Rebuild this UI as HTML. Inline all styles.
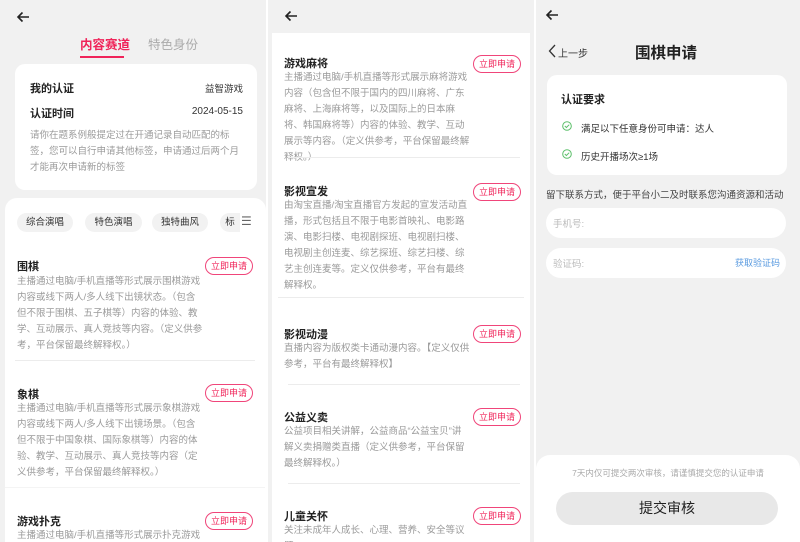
<!DOCTYPE html><html><head><meta charset="utf-8"><style>
*{margin:0;padding:0;box-sizing:border-box}
body{width:800px;height:542px;overflow:hidden;background:#fff;font-family:"Liberation Sans","Noto Sans CJK SC",sans-serif;position:relative}
.p{position:absolute;top:0;height:542px;background:#f1f1f1;overflow:hidden}
.a{position:absolute;white-space:nowrap}
.arrow{position:absolute;width:14px;height:12px}
.t{font-size:11px;font-weight:bold;color:#222}
.d{font-size:9.5px;color:#9a9a9a;line-height:16px;white-space:normal}
.btn{position:absolute;width:48px;height:18px;border:1.3px solid #f0457a;border-radius:10px;color:#f0245a;font-size:9px;text-align:center;line-height:16px}
.hr{position:absolute;height:1px;background:#ececec}
.chip{position:absolute;top:213px;height:19px;border-radius:10px;background:#f2f2f2;font-size:9.5px;color:#333;text-align:center;line-height:19px}
</style></head><body>
<div class="p" style="left:0;width:266px">
<svg class="arrow" style="left:16px;top:11px" viewBox="0 0 14 12"><path d="M13 6H2M6.5 1.5L2 6l4.5 4.5" stroke="#222" stroke-width="1.6" fill="none"/></svg>
<div class="a" style="left:80px;top:34px;font-size:12.5px;font-weight:bold;color:#f0245a">内容赛道</div>
<div style="position:absolute;left:80px;top:56px;width:44px;height:2px;background:#f0245a"></div>
<div class="a" style="left:148px;top:34px;font-size:12.5px;color:#aaa">特色身份</div>
<div style="position:absolute;left:15px;top:64px;width:242px;height:126px;background:#fff;border-radius:10px"></div>
<div class="a t" style="left:30px;top:80px">我的认证</div>
<div class="a" style="right:23px;top:81px;font-size:9.5px;color:#333">益智游戏</div>
<div class="a t" style="left:30px;top:105px">认证时间</div>
<div class="a" style="right:23px;top:106px;font-size:10px;color:#333">2024-05-15</div>
<div class="a d" style="left:30px;top:128px;width:218px">请你在题系例般提定过在开通记录自动匹配的标签，您可以自行申请其他标签，申请通过后两个月才能再次申请新的标签</div>
<div style="position:absolute;left:5px;top:198px;width:261px;height:360px;background:#fff;border-radius:12px 12px 0 0"></div>
<div class="chip" style="left:17px;width:56px">综合演唱</div>
<div class="chip" style="left:85px;width:57px">特色演唱</div>
<div class="chip" style="left:152px;width:56px">独特曲风</div>
<div class="chip" style="left:220px;width:20px;border-radius:10px 0 0 10px">标</div>
<div class="a" style="left:241px;top:214px;font-size:12px;color:#666">☰</div>
<div class="a t" style="left:17px;top:258px">围棋</div>
<div class="btn" style="left:205px;top:257px">立即申请</div>
<div class="a d" style="left:17px;top:274px;width:186px">主播通过电脑/手机直播等形式展示围棋游戏内容或线下两人/多人线下出镜状态。（包含但不限于围棋、五子棋等）内容的体验、教学、互动展示、真人竞技等内容。（定义供参考，平台保留最终解释权。）</div>
<div class="hr" style="left:15px;top:360px;width:240px"></div>
<div class="a t" style="left:17px;top:386px">象棋</div>
<div class="btn" style="left:205px;top:384px">立即申请</div>
<div class="a d" style="left:17px;top:401px;width:186px">主播通过电脑/手机直播等形式展示象棋游戏内容或线下两人/多人线下出镜场景。（包含但不限于中国象棋、国际象棋等）内容的体验、教学、互动展示、真人竞技等内容（定义供参考，平台保留最终解释权。）</div>
<div class="hr" style="left:5px;top:487px;width:260px;background:#f4f4f4"></div>
<div class="a t" style="left:17px;top:513px">游戏扑克</div>
<div class="btn" style="left:205px;top:512px">立即申请</div>
<div class="a d" style="left:17px;top:528px;width:186px">主播通过电脑/手机直播等形式展示扑克游戏</div>
</div>
<div class="p" style="left:268px;width:266px">
<svg class="arrow" style="left:16px;top:10px" viewBox="0 0 14 12"><path d="M13 6H2M6.5 1.5L2 6l4.5 4.5" stroke="#222" stroke-width="1.6" fill="none"/></svg>
<div style="position:absolute;left:4px;top:33px;width:258px;height:520px;background:#fff"></div>
<div class="a t" style="left:16px;top:55px">游戏麻将</div>
<div class="btn" style="left:205px;top:55px">立即申请</div>
<div class="a d" style="left:16px;top:70px;width:186px">主播通过电脑/手机直播等形式展示麻将游戏内容（包含但不限于国内的四川麻将、广东麻将、上海麻将等，以及国际上的日本麻将、韩国麻将等）内容的体验、教学、互动展示等内容。（定义供参考，平台保留最终解释权。）</div>
<div class="hr" style="left:20px;top:157px;width:232px"></div>
<div class="a t" style="left:16px;top:183px">影视宣发</div>
<div class="btn" style="left:205px;top:183px">立即申请</div>
<div class="a d" style="left:16px;top:198px;width:186px">由淘宝直播/淘宝直播官方发起的宣发活动直播，形式包括且不限于电影首映礼、电影路演、电影扫楼、电视剧探班、电视剧扫楼、电视剧主创连麦、综艺探班、综艺扫楼、综艺主创连麦等。定义仅供参考，平台有最终解释权。</div>
<div class="hr" style="left:10px;top:297px;width:246px"></div>
<div class="a t" style="left:16px;top:326px">影视动漫</div>
<div class="btn" style="left:205px;top:325px">立即申请</div>
<div class="a d" style="left:16px;top:341px;width:186px">直播内容为版权类卡通动漫内容。【定义仅供参考，平台有最终解释权】</div>
<div class="hr" style="left:20px;top:384px;width:232px"></div>
<div class="a t" style="left:16px;top:409px">公益义卖</div>
<div class="btn" style="left:205px;top:408px">立即申请</div>
<div class="a d" style="left:16px;top:424px;width:186px">公益项目相关讲解，公益商品“公益宝贝”讲解义卖捐赠类直播（定义供参考，平台保留最终解释权。）</div>
<div class="hr" style="left:20px;top:483px;width:232px"></div>
<div class="a t" style="left:16px;top:508px">儿童关怀</div>
<div class="btn" style="left:205px;top:507px">立即申请</div>
<div class="a d" style="left:16px;top:523px;width:186px">关注未成年人成长、心理、营养、安全等议题</div>
</div>
<div class="p" style="left:536px;width:264px">
<svg class="arrow" style="left:9px;top:9px" viewBox="0 0 14 12"><path d="M13 6H2M6.5 1.5L2 6l4.5 4.5" stroke="#222" stroke-width="1.6" fill="none"/></svg>
<svg style="position:absolute;left:12px;top:44px" width="8" height="14" viewBox="0 0 8 14"><path d="M7 1L1.5 7 7 13" stroke="#333" stroke-width="1.3" fill="none"/></svg>
<div class="a" style="left:22px;top:45px;font-size:10px;color:#333">上一步</div>
<div class="a" style="left:99px;top:41px;font-size:15.5px;font-weight:bold;color:#222">围棋申请</div>
<div style="position:absolute;left:11px;top:75px;width:240px;height:100px;background:#fff;border-radius:10px"></div>
<div class="a" style="left:25px;top:91px;font-size:11px;font-weight:bold;color:#222">认证要求</div>
<svg style="position:absolute;left:26px;top:121px" width="10" height="10" viewBox="0 0 10 10"><circle cx="5" cy="5" r="4.3" stroke="#5cbf6a" fill="none"/><path d="M2.8 5l1.6 1.5 2.8-2.8" stroke="#5cbf6a" fill="none"/></svg>
<div class="a" style="left:45px;top:121px;font-size:9.5px;color:#333">满足以下任意身份可申请：达人</div>
<svg style="position:absolute;left:26px;top:149px" width="10" height="10" viewBox="0 0 10 10"><circle cx="5" cy="5" r="4.3" stroke="#5cbf6a" fill="none"/><path d="M2.8 5l1.6 1.5 2.8-2.8" stroke="#5cbf6a" fill="none"/></svg>
<div class="a" style="left:45px;top:149px;font-size:9.5px;color:#333">历史开播场次≥1场</div>
<div class="a" style="left:10px;top:187px;font-size:9.5px;color:#444">留下联系方式，便于平台小二及时联系您沟通资源和活动</div>
<div style="position:absolute;left:10px;top:208px;width:240px;height:30px;background:#fff;border-radius:15px"></div>
<div class="a" style="left:17px;top:216px;font-size:9.5px;color:#bbb">手机号:</div>
<div style="position:absolute;left:10px;top:248px;width:240px;height:30px;background:#fff;border-radius:15px"></div>
<div class="a" style="left:17px;top:256px;font-size:9.5px;color:#bbb">验证码:</div>
<div class="a" style="right:20px;top:256px;font-size:9px;color:#5b9be0">获取验证码</div>
<div style="position:absolute;left:0;top:455px;width:264px;height:90px;background:#fff;border-radius:14px 14px 0 0"></div>
<div class="a" style="left:0;width:264px;text-align:center;top:467px;font-size:8.5px;color:#aaa">7天内仅可提交两次审核，请谨慎提交您的认证申请</div>
<div style="position:absolute;left:20px;top:492px;width:222px;height:33px;background:#e8e8e8;border-radius:17px;text-align:center;line-height:33px;font-size:14px;color:#222">提交审核</div>
</div>
</body></html>
